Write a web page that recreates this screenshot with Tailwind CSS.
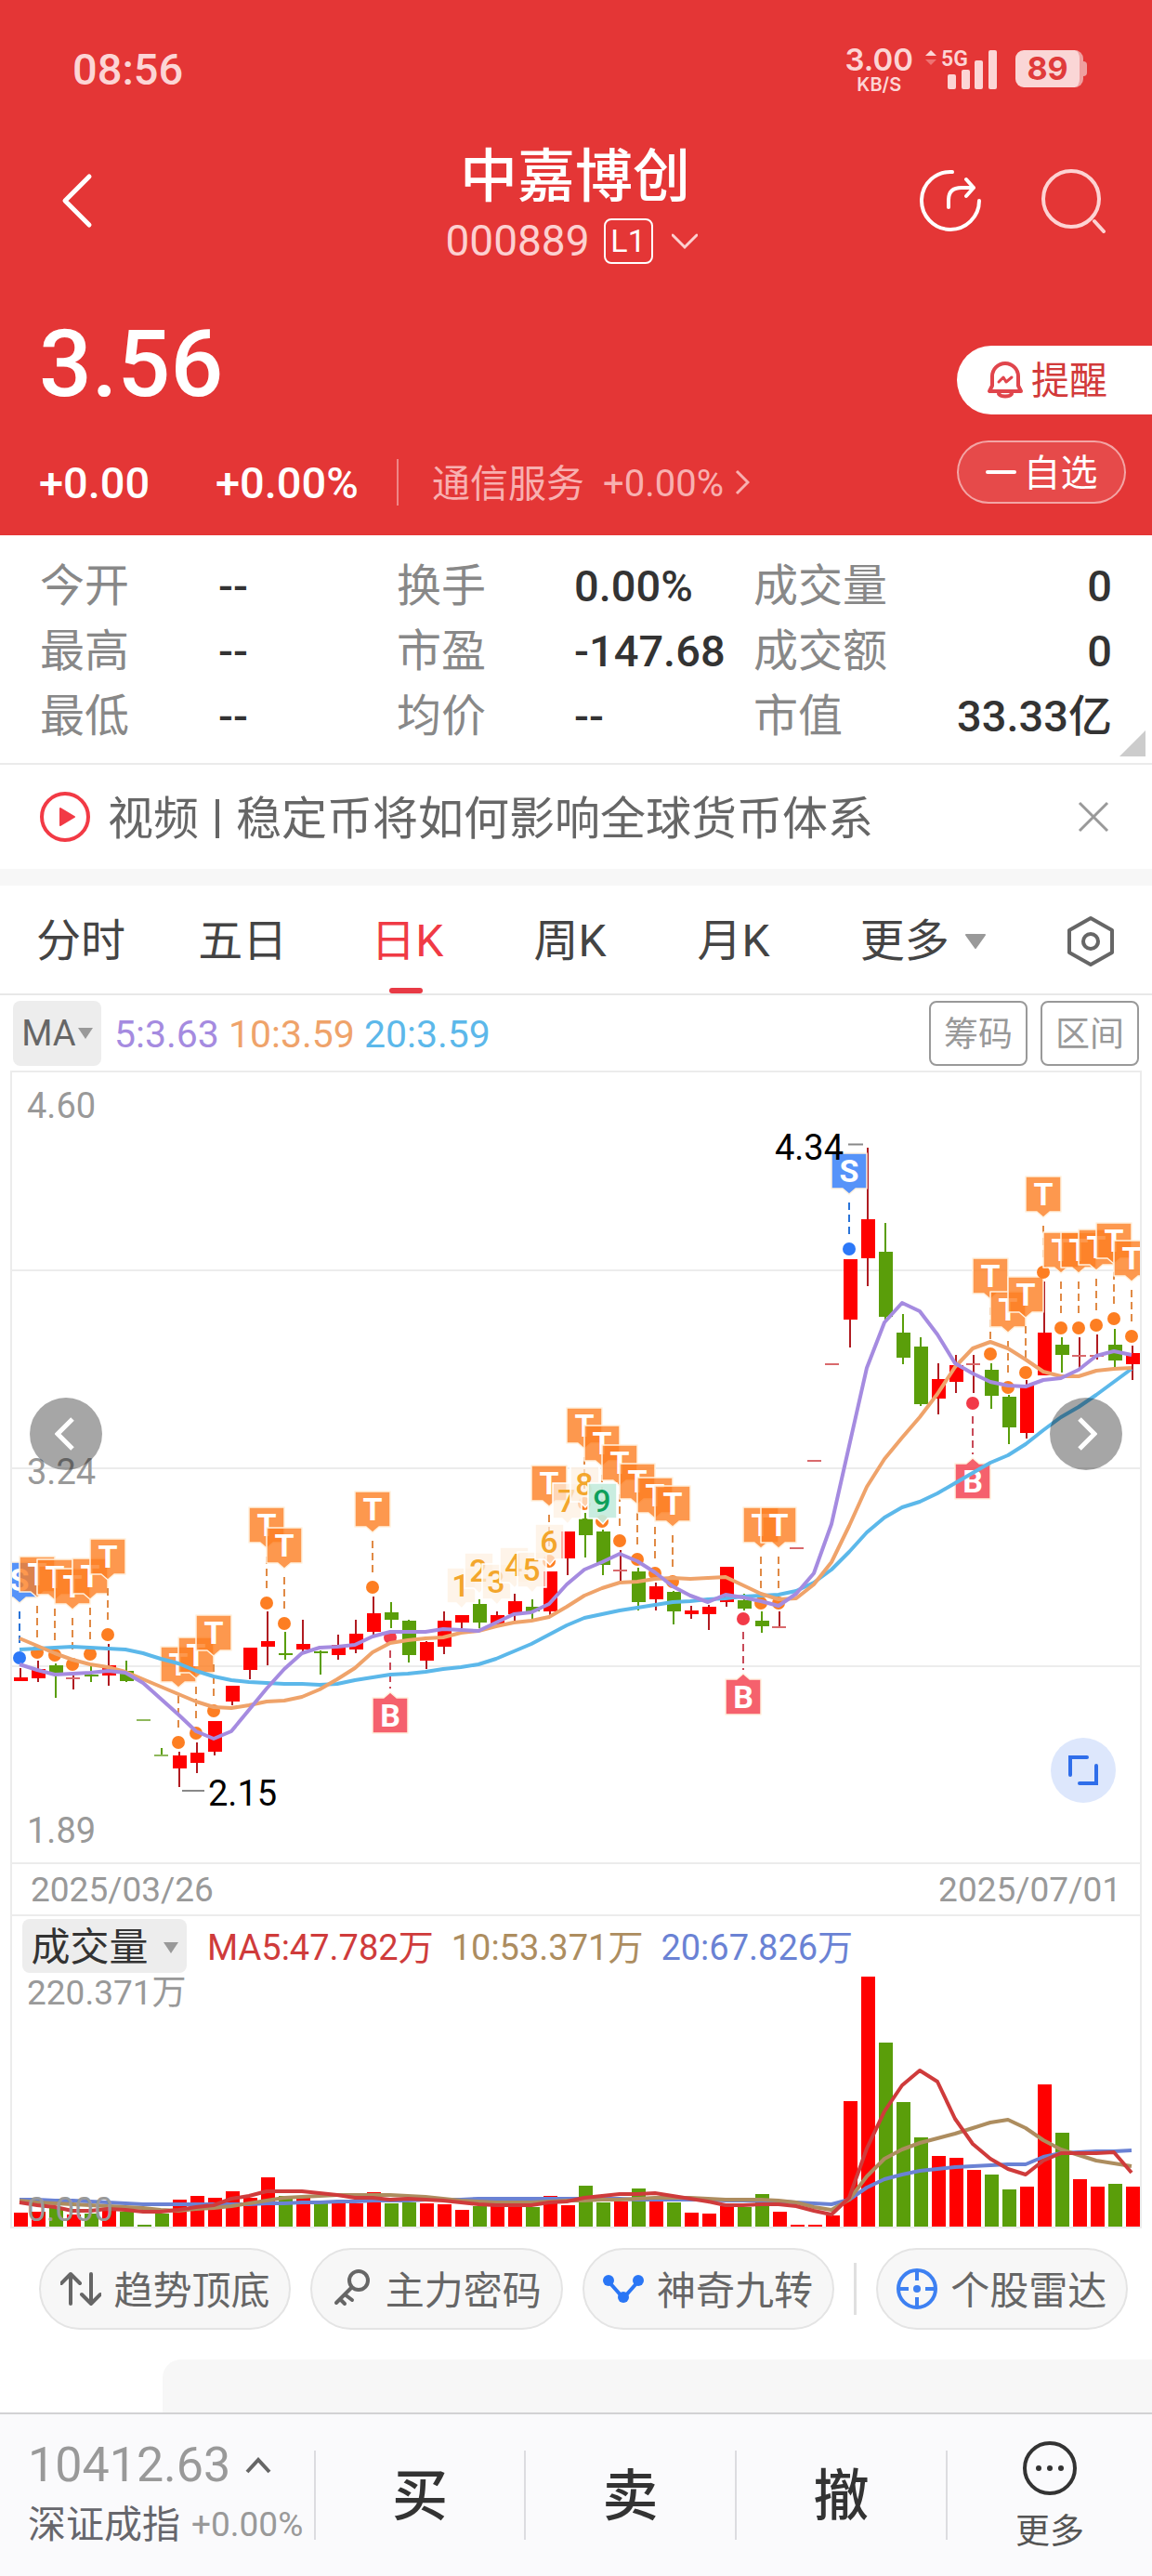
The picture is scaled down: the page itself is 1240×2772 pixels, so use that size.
<!DOCTYPE html>
<html lang="zh-CN">

<head>
    <meta charset="UTF-8">
    <meta name="viewport" content="width=device-width, initial-scale=1.0">
    <title>中嘉博创 000889</title>
    <script src="https://cdn.jsdelivr.net/npm/@tailwindcss/browser@4"></script>
</head>

<body class="h-screen flex flex-col bg-white text-[#333] font-[family-name:Roboto,'Noto_Sans_CJK_SC',sans-serif]">
    <main class="flex-1 min-h-0 overflow-hidden">

        <!-- Header -->
        <header class="bg-[#e43636] text-white h-[576px]">
            <div class="h-[148px] pl-[78px] pr-[70px] flex items-center justify-between text-[#fcd5d5]">
                <span class="text-[47px] font-medium leading-none">08:56</span>
                <div class="flex items-center">
                    <div class="flex flex-col items-center font-[family-name:Inter,sans-serif] font-semibold">
                        <span class="text-[33px] leading-[33px]">3.00</span>
                        <span class="text-[20px] leading-[20px]">KB/S</span>
                    </div>
                    <svg class="w-[96px] h-[48px] ml-2" viewBox="0 0 96 48">
                        <path d="M11 4l6 6H5z" fill="#fcd5d5" />
                        <path d="M11 20l6-6H5z" fill="#ee7272" />
                        <text x="22" y="21" font-size="23" font-weight="600" fill="#fcd5d5">5G</text>
                        <g fill="#fcd5d5">
                            <rect x="29" y="30" width="9" height="16" rx="2" />
                            <rect x="44" y="25" width="9" height="21" rx="2" />
                            <rect x="58" y="15" width="9" height="31" rx="2" />
                            <rect x="73" y="4" width="9" height="42" rx="2" />
                        </g>
                    </svg>
                    <div class="flex items-center ml-[6px]">
                        <div class="w-[73px] h-10 rounded-[9px] bg-[#fad6d6] border-r-4 border-[#efa0a0] flex items-center justify-center font-[family-name:Inter,sans-serif] font-bold text-[34px] leading-none text-[#e03a3a]">89</div>
                        <div class="w-1 h-4 rounded-r bg-[#efa0a0]"></div>
                    </div>
                </div>
            </div>

            <nav class="h-[134px] pl-12 pr-[50px] grid grid-cols-[1fr_auto_1fr] items-center">
                <button class="justify-self-start" aria-label="返回">
                    <svg class="w-[70px] h-[64px]" viewBox="0 0 70 64" fill="none" stroke="#fff" stroke-width="5" stroke-linecap="round" stroke-linejoin="round">
                        <path d="M48 6L22 32l26 26" />
                    </svg>
                </button>
                <div class="flex flex-col items-center">
                    <h1 class="pt-2 text-[62px] leading-[70px] font-medium">中嘉博创</h1>
                    <button class="flex items-center mt-2 h-[50px] -ml-2">
                        <span class="text-[46px] leading-none text-[#fcd0d0]">000889</span>
                        <span class="ml-[15px] w-[53px] h-[49px] border-2 border-white rounded-lg text-[34px] leading-[44px] text-center">L1</span>
                        <svg class="w-7 h-5 ml-5" viewBox="0 0 28 20" fill="none" stroke="#fcd0d0" stroke-width="3" stroke-linecap="round">
                            <path d="M1 4l13 13L27 4" />
                        </svg>
                    </button>
                </div>
                <div class="justify-self-end flex gap-[62px]">
                    <button aria-label="分享">
                        <svg class="w-[70px] h-[70px]" viewBox="0 0 70 70" fill="none" stroke="#fff" stroke-width="4" stroke-linecap="round" stroke-linejoin="round">
                            <path d="M37 4A31 31 0 1 0 66 35M33 42v-8q0-13 14-13h13M52 12l8 9-8 9" />
                        </svg>
                    </button>
                    <button aria-label="搜索">
                        <svg class="w-[70px] h-[70px]" viewBox="0 0 70 70" fill="none" stroke="#fdd3d3" stroke-width="4" stroke-linecap="round">
                            <circle cx="33" cy="33" r="30" />
                            <path d="M58 57l10 11" />
                        </svg>
                    </button>
                </div>
            </nav>

            <div class="flex justify-between pl-[42px]">
                <div>
                    <div class="mt-[62px] text-[100px] leading-[96px] font-medium">3.56</div>
                    <div class="mt-[54px] h-[50px] flex items-center">
                        <span class="w-[190px] text-[47px] leading-none font-medium">+0.00</span>
                        <span class="w-[195px] text-[47px] leading-none font-medium">+0.00%</span>
                        <a href="#" class="h-full pl-9 border-l-2 border-white/40 flex items-center text-[#f8b0b0]">
                            <span class="pt-1 text-[41px] leading-none">通信服务</span>
                            <span class="ml-5 pt-1 text-[40px] leading-none">+0.00%</span>
                            <svg class="w-4 h-7 ml-3" viewBox="0 0 16 28" fill="none" stroke="#f8b0b0" stroke-width="3">
                                <path d="M2 2l12 12L2 26" />
                            </svg>
                        </a>
                    </div>
                </div>
                <div class="w-[210px] pt-[90px] flex flex-col">
                    <button class="h-[74px] rounded-l-full bg-white pl-[32px] flex items-center text-[#d23a3a] text-[41px]">
                        <svg class="w-10 h-10 mr-2" viewBox="0 0 40 40" fill="none" stroke="#e0454c" stroke-width="4" stroke-linecap="round" stroke-linejoin="round">
                            <path d="M3 32h34l-3-6V16a14 14 0 0 0-28 0v10zM13 35a8 5 0 0 0 14 0" />
                            <path d="M13 22l5-5 3 5 6-5" stroke-width="3" />
                        </svg>
                        <span class="pt-1">提醒</span>
                    </button>
                    <button class="mt-7 w-[182px] h-[68px] rounded-full border-2 border-white/50 bg-white/10 flex items-center justify-center text-[40px]">
                        <span class="w-[33px] h-1 bg-white rounded mr-2"></span><span class="pt-1">自选</span>
                    </button>
                </div>
            </div>
        </header>

        <!-- Quote figures -->
        <section class="relative border-b-2 border-[#ebebeb] h-[247px] px-[43px] pt-5">
            <dl class="grid grid-cols-[192fr_192fr_191fr_193fr_386fr] text-[47px] leading-[70px] font-medium [&_dt]:text-[#888] [&_dt]:text-[48px] [&_dt]:font-normal">
                <dt>今开</dt><dd>--</dd><dt>换手</dt><dd>0.00%</dd>
                <div class="flex justify-between"><dt>成交量</dt><dd>0</dd></div>
                <dt>最高</dt><dd>--</dd><dt>市盈</dt><dd>-147.68</dd>
                <div class="flex justify-between"><dt>成交额</dt><dd>0</dd></div>
                <dt>最低</dt><dd>--</dd><dt>均价</dt><dd>--</dd>
                <div class="flex justify-between"><dt>市值</dt><dd>33.33亿</dd></div>
            </dl>
            <svg class="absolute right-[7px] bottom-[7px] w-7 h-7" viewBox="0 0 28 28">
                <path d="M28 0v28H0z" fill="#ccc" />
            </svg>
        </section>

        <!-- News strip -->
        <section class="h-[130px] border-b-[18px] border-[#f7f7f7] pl-[42px] pr-[46px] flex items-center">
            <svg class="w-14 h-14 shrink-0" viewBox="0 0 56 56">
                <circle cx="28" cy="28" r="25" fill="none" stroke="#f23a45" stroke-width="4" />
                <path d="M23 19l15 9-15 9z" fill="#f23a45" stroke="#f23a45" stroke-width="2" stroke-linejoin="round" />
            </svg>
            <a href="#" class="ml-[18px] pt-1 flex-1 flex items-center text-[49px] leading-none text-[#666] whitespace-nowrap">
                视频<span class="w-1 h-[42px] bg-[#666] mx-[18px]"></span>稳定币将如何影响全球货币体系
            </a>
            <button aria-label="关闭">
                <svg class="w-[34px] h-[34px]" viewBox="0 0 34 34" stroke="#999" stroke-width="3">
                    <path d="M2 2l30 30M32 2L2 32" />
                </svg>
            </button>
        </section>

        <!-- Period tabs -->
        <nav class="h-[118px] border-b-2 border-[#e8e8e8] px-[39px] grid grid-cols-[174fr_186fr_175fr_176fr_175fr_221fr_54fr] text-[48px] text-[#444] [&_button]:h-full [&_button]:pt-1 [&_button]:text-left">
            <button>分时</button>
            <button>五日</button>
            <button class="relative justify-self-start text-[#f03a45]">日K<span class="absolute left-5 bottom-0 w-9 h-[6px] rounded bg-[#e83a45]"></span></button>
            <button>周K</button>
            <button>月K</button>
            <button class="flex items-center">更多
                <svg class="w-6 h-4 ml-4" viewBox="0 0 24 16"><path d="M2 1h20L12 15z" fill="#999" stroke="#999" stroke-width="2" stroke-linejoin="round" /></svg>
            </button>
            <button aria-label="设置">
                <svg class="w-[54px] h-[56px]" viewBox="0 0 54 56" fill="none" stroke="#666" stroke-width="4" stroke-linejoin="round">
                    <path d="M27 3l23 13v24L27 53 4 40V16z" />
                    <circle cx="27" cy="28" r="8" />
                </svg>
            </button>
        </nav>

        <div class="h-[81px] px-[14px] flex items-center text-[41px] leading-none">
            <button class="w-[95px] h-[70px] rounded-lg bg-[#ededed] text-[38px] text-[#666] flex items-center justify-center">MA
                <svg class="w-4 h-3 ml-[2px]" viewBox="0 0 16 12"><path d="M0 0h16L8 12z" fill="#999" /></svg>
            </button>
            <span class="ml-[14px] pt-1 text-[#a58be0]">5:3.63</span>
            <span class="ml-[10px] pt-1 text-[#efa36a]">10:3.59</span>
            <span class="ml-[10px] pt-1 text-[#5cb8ea]">20:3.59</span>
            <button class="ml-auto w-[106px] h-[70px] pt-1 rounded-lg border-2 border-[#999] text-[37px] text-[#999]">筹码</button>
            <button class="ml-[14px] w-[106px] h-[70px] pt-1 rounded-lg border-2 border-[#999] text-[37px] text-[#999]">区间</button>
        </div>

        <!-- Charts -->
        <section class="mx-[11px] border-2 border-[#ececec]">
            <div class="relative border-b-2 border-[#ececec]">
                <svg id="kline" class="block w-full" viewBox="13 1154 1214 850"></svg>
                <button class="absolute left-[19px] top-[350px] w-[78px] h-[78px] rounded-full bg-black/35 flex items-center justify-center" aria-label="向左">
                    <svg class="w-6 h-9" viewBox="0 0 24 36" fill="none" stroke="#fff" stroke-width="5"><path d="M19 2L3 18l16 16" /></svg>
                </button>
                <button class="absolute right-[19px] top-[350px] w-[78px] h-[78px] rounded-full bg-black/35 flex items-center justify-center" aria-label="向右">
                    <svg class="w-6 h-9" viewBox="0 0 24 36" fill="none" stroke="#fff" stroke-width="5"><path d="M5 2l16 16L5 34" /></svg>
                </button>
                <button class="absolute right-[26px] bottom-16 w-[70px] h-[70px] rounded-full bg-[#dde7fc] flex items-center justify-center" aria-label="全屏">
                    <svg class="w-8 h-8" viewBox="0 0 32 32" fill="none" stroke="#2f6eea" stroke-width="4" stroke-linecap="round"><path d="M2 21V2h18M30 11v19H12" /></svg>
                </button>
            </div>
            <div class="h-[56px] px-5 border-b-2 border-[#ececec] flex justify-between items-center text-[37px] leading-none text-[#999]">
                <span>2025/03/26</span>
                <span>2025/07/01</span>
            </div>
            <div class="h-[65px] pl-[11px] pb-[2px] flex items-center text-[38px] leading-none">
                <button class="w-[177px] h-[58px] pt-1 rounded-lg bg-[#ededed] text-[42px] flex items-center justify-center">成交量
                    <svg class="w-4 h-3 ml-4" viewBox="0 0 16 12"><path d="M0 0h16L8 12z" fill="#999" /></svg>
                </button>
                <span class="ml-[22px] pt-1 text-[#cf3b3b]">MA5:47.782万</span>
                <span class="ml-[19px] pt-1 text-[#ad8d5f]">10:53.371万</span>
                <span class="ml-[19px] pt-1 text-[#6a82d4]">20:67.826万</span>
            </div>
            <svg id="volume" class="block w-full" viewBox="13 2127 1214 269"></svg>
        </section>

        <!-- Tool pills -->
        <div class="mt-[21px] pl-[42px] pr-[26px] flex items-center gap-[21px] text-[42px] text-[#666] [&_button]:flex-1 [&_button]:h-[88px] [&_button]:rounded-full [&_button]:border-2 [&_button]:border-[#e4e4e4] [&_button]:bg-[#f7f7f7] [&_button]:flex [&_button]:items-center [&_button]:justify-center [&_button]:gap-[14px] [&_span]:pt-1">
            <button>
                <svg class="w-11 h-11" viewBox="0 0 44 44" fill="none" stroke="#666" stroke-width="4" stroke-linecap="round" stroke-linejoin="round"><path d="M11 38V6M1 16L11 6l10 10M33 6v32M23 28l10 10 10-10" /></svg>
                <span>趋势顶底</span>
            </button>
            <button>
                <svg class="w-11 h-11" viewBox="0 0 44 44" fill="none" stroke="#666" stroke-width="4" stroke-linecap="round" stroke-linejoin="round"><circle cx="29" cy="13" r="10" /><path d="M21 21L5 37M9 33l5 5M14 28l8 6" /></svg>
                <span>主力密码</span>
            </button>
            <button>
                <svg class="w-11 h-11" viewBox="0 0 44 44" fill="none" stroke="#2a76f5" stroke-width="4"><path d="M6 14l16 18 16-18" /><g fill="#2a76f5" stroke="none"><circle cx="6" cy="13" r="6" /><circle cx="38" cy="13" r="6" /><circle cx="22" cy="31" r="6" /></g></svg>
                <span>神奇九转</span>
            </button>
            <div class="w-[3px] h-14 bg-[#e0e0e0]"></div>
            <button>
                <svg class="w-11 h-11" viewBox="0 0 44 44" fill="none" stroke="#3d80f2" stroke-width="4"><circle cx="22" cy="22" r="20" /><path d="M22 3v10M22 31v10M3 22h10M31 22h10" /><circle cx="22" cy="22" r="4" fill="#3d80f2" stroke="none" /></svg>
                <span>个股雷达</span>
            </button>
        </div>

        <div class="mt-8 ml-[175px] h-[200px] rounded-tl-[20px] bg-[#f7f7f7]"></div>
    </main>

    <!-- Trade bar -->
    <footer class="h-[176px] shrink-0 border-t-2 border-[#d2d2d4] bg-[#fafafc] grid grid-cols-[338fr_226fr_227fr_227fr_222fr] items-center">
        <a href="#" class="pl-[30px] text-[#999]">
            <div class="flex items-center text-[52px] leading-[60px]">10412.63
                <svg class="w-7 h-5 ml-4" viewBox="0 0 28 20" fill="none" stroke="#666" stroke-width="4"><path d="M2 17L14 4l12 13" /></svg>
            </div>
            <div class="mt-1 flex items-center text-[37px] leading-[60px] whitespace-nowrap"><span class="text-[41px] text-[#66666c] mr-3">深证成指</span>+0.00%</div>
        </a>
        <button class="h-24 pt-1 border-l-2 border-[#dcdce0] text-[60px] leading-none font-medium">买</button>
        <button class="h-24 pt-1 border-l-2 border-[#dcdce0] text-[60px] leading-none font-medium">卖</button>
        <button class="h-24 pt-1 border-l-2 border-[#dcdce0] text-[60px] leading-none font-medium">撤</button>
        <button class="h-24 pt-1 border-l-2 border-[#dcdce0] flex flex-col items-center justify-center text-[37px] leading-[46px] text-[#555]">
            <svg class="w-[60px] h-[60px] mb-4 shrink-0" viewBox="0 0 60 60"><circle cx="30" cy="30" r="27" fill="none" stroke="#333" stroke-width="4" /><g fill="#333"><circle cx="18" cy="30" r="3" /><circle cx="30" cy="30" r="3" /><circle cx="42" cy="30" r="3" /></g></svg>
            更多
        </button>
    </footer>

    <script>
        const RED = '#ff0000', GREEN = '#5a9e0a', WICK = '#b01c22';
        const x = i => 21 + i * 19;
        const line = (ys, color) =>
            `<polyline points="${ys.map((y, i) => x(i) + ',' + y).join(' ')}" fill="none" stroke="${color}" stroke-width="4" stroke-linejoin="round"/>`;

        // [up?, high, body top, body bottom, low]
        const candles = [
            [1,1795,1805,1809,1809],[1,1787,1796,1806,1810],[0,1790,1792,1800,1827],[1,1803,1805,1806,1818],
            [0,1793,1802,1804,1810],[1,1769,1792,1803,1814],[0,1787,1798,1809,1810],[0,1851,1850,1851,1851],
            [0,1881,1888,1889,1889],[1,1885,1889,1903,1923],[1,1875,1886,1897,1908],[1,1852,1852,1885,1889],
            [1,1814,1814,1831,1835],[1,1773,1773,1797,1807],[1,1734,1766,1772,1792],[0,1756,1779,1781,1786],
            [1,1743,1769,1775,1780],[0,1776,1777,1779,1802],[1,1759,1770,1781,1786],[1,1743,1758,1775,1779],
            [1,1718,1736,1756,1759],[0,1724,1735,1743,1752],[0,1743,1744,1781,1789],[1,1766,1767,1787,1796],
            [1,1734,1744,1772,1780],[1,1738,1738,1746,1752],[0,1721,1726,1746,1752],[1,1734,1738,1748,1748],
            [1,1715,1723,1737,1744],[0,1721,1729,1734,1742],[1,1691,1691,1734,1738],[1,1648,1648,1677,1695],
            [0,1628,1634,1652,1676],[0,1646,1648,1684,1695],[1,1668,1689,1690,1701],[0,1687,1691,1724,1733],
            [1,1703,1707,1721,1733],[0,1712,1713,1734,1748],[1,1728,1733,1737,1742],[1,1727,1729,1737,1754],
            [1,1686,1686,1724,1729],[0,1715,1722,1731,1733],[0,1734,1744,1750,1757],[1,1734,1750,1751,1751],
            [1,1666,1665,1666,1666],[1,1572,1571,1572,1572],[1,1468,1467,1468,1468],[1,1355,1355,1420,1450],
            [1,1235,1312,1354,1384],[0,1316,1347,1417,1422],[0,1414,1434,1461,1468],[0,1439,1449,1511,1513],
            [1,1467,1484,1505,1522],[1,1458,1469,1487,1499],[1,1458,1467,1468,1499],[0,1467,1474,1502,1516],
            [0,1501,1503,1536,1554],[1,1485,1491,1542,1548],[1,1379,1434,1480,1480],[0,1439,1447,1458,1477],
            [1,1439,1458,1459,1472],[1,1436,1458,1459,1463],[0,1430,1447,1464,1471],[1,1448,1456,1468,1485]
        ];
        const ma5 = [1791,1797,1802,1801,1800,1798,1800,1811,1828,1845,1863,1871,1863,1840,1817,1796,1779,1773,1772,1770,1761,1756,1756,1756,1753,1754,1755,1746,1737,1735,1726,1705,1689,1681,1672,1680,1692,1707,1717,1724,1716,1719,1723,1728,1715,1693,1640,1556,1472,1423,1402,1411,1436,1467,1478,1487,1491,1492,1485,1483,1474,1459,1454,1458];
        const ma10 = [1763,1771,1779,1786,1791,1794,1799,1807,1815,1823,1831,1837,1838,1835,1831,1830,1826,1818,1807,1795,1778,1768,1765,1763,1762,1757,1755,1750,1746,1744,1740,1729,1717,1709,1703,1702,1699,1698,1699,1698,1697,1706,1715,1721,1720,1705,1681,1642,1600,1570,1547,1525,1500,1471,1451,1444,1451,1463,1476,1481,1481,1475,1473,1472];
        const ma20 = [1775,1774,1773,1772,1773,1774,1775,1779,1785,1790,1798,1804,1808,1810,1811,1812,1812,1813,1812,1808,1805,1802,1801,1799,1796,1794,1791,1785,1777,1769,1759,1749,1741,1737,1733,1730,1727,1724,1723,1721,1720,1718,1717,1716,1712,1703,1689,1670,1649,1633,1622,1616,1607,1596,1585,1574,1566,1554,1539,1525,1514,1501,1487,1473];

        // signal flags: [type, index, dot y]
        const flags = [
            ['S',0,1784],['T',1,1778],['T',2,1781],['T',3,1791],['T',4,1780],['T',5,1759],['T',9,1875],['T',10,1865],
            ['T',11,1841],['T',14,1725],['T',15,1747],['T',20,1708],['B',21,1762],['T',30,1680],['T',32,1618],['T',33,1637],
            ['T',34,1658],['T',35,1678],['T',36,1693],['T',37,1702],['B',41,1742],['T',42,1725],['T',43,1725],['S',47,1344],
            ['B',54,1510],['T',55,1457],['T',56,1493],['T',57,1477],['T',58,1369],['T',59,1429],['T',60,1429],['T',61,1426],
            ['T',62,1419],['T',63,1438]
        ];
        const nine = [[25,1687],[26,1671],[27,1683],[28,1665],[29,1670],[30,1640],[31,1596],[32,1578],[33,1596]];
        const flagColors = { S: ['#2c78f8', '#2a74d8'], T: ['#fd7e22', '#e08a45'], B: ['#f23a48', '#c84a58'] };

        function flag([type, i, dot]) {
            const cx = x(i), [fill, dash] = flagColors[type];
            const below = type === 'B';
            const top = below ? dot + 65 : dot - 103;
            const box = below
                ? `M${cx - 19} ${top}h12l7-6 7 6h12v38h-38z`
                : `M${cx - 19} ${top}h38v38h-12l-7 6-7-6h-12z`;
            const y1 = below ? dot + 14 : top + 53, y2 = below ? top - 10 : dot - 14;
            return `<circle cx="${cx}" cy="${dot}" r="7" fill="${fill}"/>
                <path d="M${cx} ${y1}V${y2}" stroke="${dash}" stroke-width="2" stroke-dasharray="8 5"/>
                <path d="${box}" fill="${fill}" fill-opacity=".8" stroke="#fff1de" stroke-width="1.5" stroke-linejoin="round"/>
                <text x="${cx}" y="${top + 31}" text-anchor="middle" font-size="34" font-weight="700" fill="#fff">${type}</text>`;
        }

        let out = [1367, 1580, 1793].map(y => `<path d="M13 ${y}H1227" stroke="#ececec" stroke-width="2"/>`).join('');
        candles.forEach(([up, hi, a, b, lo], i) => {
            const c = up ? RED : GREEN;
            if (lo > hi) out += `<path d="M${x(i) + 1} ${hi}V${lo}" stroke="${up ? WICK : GREEN}" stroke-width="2"/>`;
            out += b - a <= 1
                ? `<path d="M${x(i) - 7} ${b}h15" stroke="${up ? '#d9696c' : '#8fb85c'}" stroke-width="2"/>`
                : `<rect x="${x(i) - 6}" y="${a}" width="15" height="${b - a}" fill="${c}"/>`;
        });
        out += flags.map(flag).join('');
        nine.forEach(([i, y], n) => {
            const last = n === 8;
            out += `<path d="M${x(i) - 15} ${y}h31v38h-10l-5 6-6-6h-10z" fill="${last ? '#c4ebdd' : '#fdf0e0'}" fill-opacity="${last ? .92 : .72}" stroke="#fff" stroke-width="1.5"/>
                <text x="${x(i)}" y="${y + 31}" text-anchor="middle" font-size="34" font-weight="500" fill="${last ? '#0fa05c' : '#f3a62c'}">${n + 1}</text>`;
        });
        out += line(ma20, '#5cb8ea') + line(ma10, '#efa36a') + line(ma5, '#a58be0');
        out += `<g font-size="38" fill="#999"><text x="29" y="1203">4.60</text><text x="29" y="1597">3.24</text><text x="29" y="1983">1.89</text></g>
            <path d="M913 1231.5h16M196 1927h24" stroke="#888" stroke-width="2"/>
            <g font-size="38" fill="#000"><text x="908" y="1248" text-anchor="end">4.34</text><text x="224" y="1943">2.15</text></g>`;
        document.getElementById('kline').innerHTML = out;

        // Volume
        const vol = [15,16,20,13,14,17,16,2,14,29,33,31,38,31,53,33,33,25,25,25,37,25,26,25,24,18,22,22,21,21,33,23,44,26,27,41,27,26,15,14,22,21,35,16,2,2,12,135,270,198,134,96,76,74,61,56,40,43,153,101,51,43,46,43];
        const v5 = [2370,2373,2375,2379,2379,2377,2378,2380,2380,2378,2375,2373,2366,2363,2358,2358,2358,2360,2362,2365,2365,2367,2366,2367,2368,2370,2372,2373,2373,2373,2370,2369,2365,2363,2361,2361,2360,2363,2366,2369,2373,2373,2372,2372,2374,2379,2383,2365,2312,2272,2244,2228,2240,2280,2307,2323,2334,2340,2325,2317,2317,2317,2316,2338];
        const v10 = [2368,2370,2371,2372,2373,2374,2375,2376,2378,2379,2377,2376,2374,2371,2368,2365,2364,2363,2362,2362,2362,2362,2363,2364,2366,2368,2369,2370,2370,2370,2369,2368,2368,2367,2367,2366,2365,2365,2365,2366,2367,2367,2367,2368,2370,2375,2378,2367,2342,2323,2313,2306,2301,2296,2290,2284,2281,2290,2303,2313,2319,2325,2328,2331];
        const v20 = [2367,2367,2368,2368,2369,2370,2371,2372,2372,2372,2372,2372,2372,2372,2371,2371,2370,2370,2369,2369,2368,2368,2368,2367,2367,2367,2366,2366,2366,2366,2366,2366,2366,2366,2366,2367,2367,2367,2367,2367,2368,2368,2368,2369,2370,2371,2372,2367,2354,2345,2340,2336,2334,2332,2331,2330,2329,2329,2321,2317,2316,2315,2315,2314];
        document.getElementById('volume').innerHTML =
            vol.map((h, i) => `<rect x="${x(i) - 6}" y="${2396 - h}" width="15" height="${h}" fill="${candles[i][0] ? RED : GREEN}"/>`).join('') +
            line(v20, '#6a82d4') + line(v10, '#ad8d5f') + line(v5, '#cf3b3b') +
            `<g font-size="37" fill="#999"><text x="29" y="2157">220.371万</text><text x="29" y="2390">0.000</text></g>`;
    </script>
</body>

</html>
